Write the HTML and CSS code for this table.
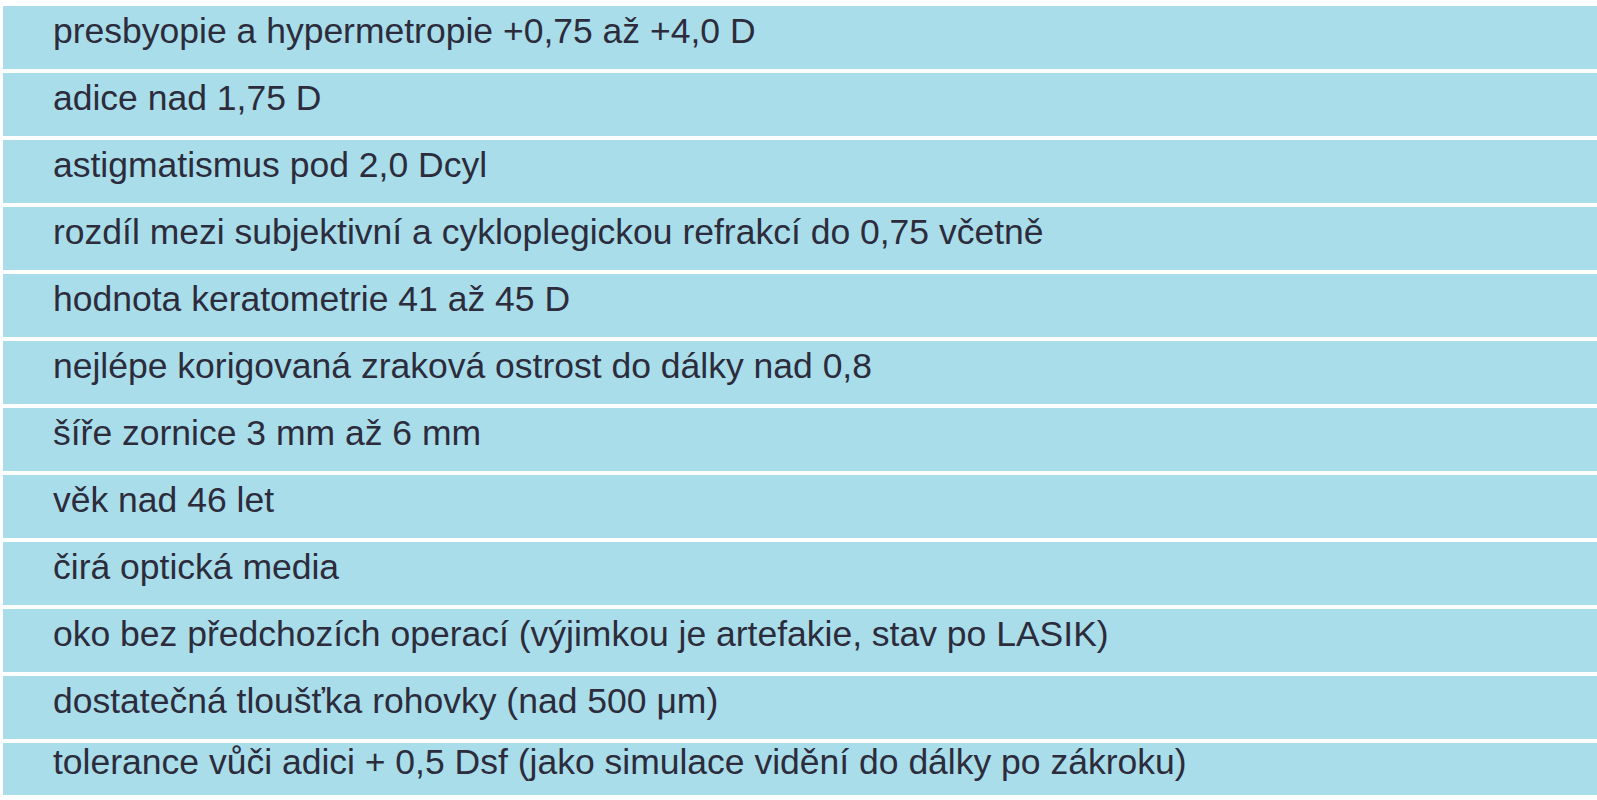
FILE: index.html
```html
<!DOCTYPE html>
<html lang="cs">
<head>
<meta charset="utf-8">
<title>Indikace</title>
<link rel="stylesheet" href="styles.css">
</head>
<body>
<div class="list">
  <div class="row">presbyopie a hypermetropie +0,75 až +4,0 D</div>
  <div class="row">adice nad 1,75 D</div>
  <div class="row">astigmatismus pod 2,0 Dcyl</div>
  <div class="row">rozdíl mezi subjektivní a cykloplegickou refrakcí do 0,75 včetně</div>
  <div class="row">hodnota keratometrie 41 až 45 D</div>
  <div class="row">nejlépe korigovaná zraková ostrost do dálky nad 0,8</div>
  <div class="row">šíře zornice 3 mm až 6 mm</div>
  <div class="row">věk nad 46 let</div>
  <div class="row">čirá optická media</div>
  <div class="row">oko bez předchozích operací (výjimkou je artefakie, stav po LASIK)</div>
  <div class="row">dostatečná tloušťka rohovky (nad 500 μm)</div>
  <div class="row last">tolerance vůči adici + 0,5 Dsf (jako simulace vidění do dálky po zákroku)</div>
</div>
</body>
</html>
```
FILE: styles.css
```css
html, body {
  margin: 0;
  padding: 0;
  background: #ffffff;
}
body {
  padding: 6px 0 0 3px;
  overflow: hidden;
  height: 800px;
  box-sizing: border-box;
}
.list {
  display: flex;
  flex-direction: column;
  gap: 4px;
}
.row {
  height: 63px;
  box-sizing: border-box;
  background: #a9dde9;
  padding: 5px 0 0 50px;
  font-family: "Liberation Sans", Arial, sans-serif;
  font-size: 35.5px;
  line-height: 40px;
  color: #2c2c3c;
  white-space: nowrap;
}
.row.last {
  height: 52px;
  padding-top: 0;
  line-height: 38px;
}
```
